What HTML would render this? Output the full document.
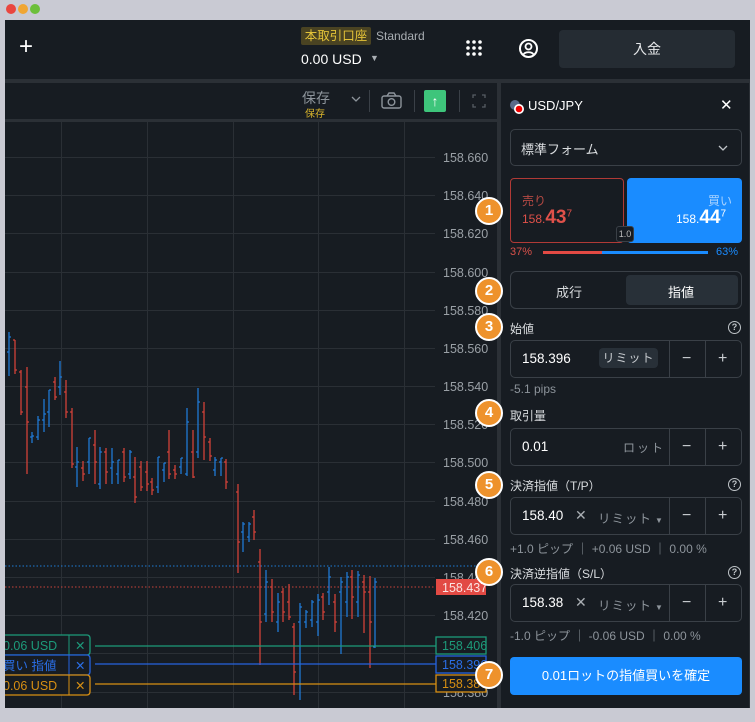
<!DOCTYPE html>
<html><head><meta charset="utf-8"><style>
*{margin:0;padding:0;box-sizing:border-box}
body{width:755px;height:722px;background:#c9cad3;position:relative;overflow:hidden;font-family:"Liberation Sans","Noto Sans CJK JP",sans-serif;color:#e6e8ea}
.a{position:absolute}
.dk{background:#171c22}
.t{position:absolute;white-space:nowrap}
.box{position:absolute;border:1px solid #3a4047;border-radius:5px}
.badge{position:absolute;width:28px;height:28px;border-radius:50%;background:#ee922c;border:2.5px solid #fff;color:#fff;font-weight:bold;font-size:15px;text-align:center;line-height:23px}
.lbl{font-size:12px;color:#d8dbde}
.sub{font-size:12px;color:#8d949b}
.q{position:absolute;width:13px;height:13px;border:1.5px solid #bfc4c8;border-radius:50%;font-size:9px;font-weight:bold;text-align:center;line-height:10px;color:#bfc4c8}
.div{position:absolute;top:0;bottom:0;width:1px;background:#3a4047}
.pm{position:absolute;font-size:16px;color:#c8ccd0;top:0;line-height:36px}
</style></head><body>
<div class="a" style="left:6px;top:4px;width:10px;height:10px;border-radius:50%;background:#e9463f"></div>
<div class="a" style="left:18px;top:4px;width:10px;height:10px;border-radius:50%;background:#f0a633"></div>
<div class="a" style="left:30px;top:4px;width:10px;height:10px;border-radius:50%;background:#6cbf3a"></div>
<div class="a" style="left:5px;top:20px;width:745px;height:688px;background:#2b3036"></div>
<div class="a dk" style="left:5px;top:20px;width:745px;height:59px"></div>
<div class="a dk" style="left:5px;top:83px;width:492px;height:36px"></div>
<div class="a dk" style="left:5px;top:122px;width:492px;height:586px"></div>
<div class="a dk" style="left:501px;top:83px;width:248px;height:625px"></div>
<div class="t" style="left:19px;top:33px;font-size:24px;color:#fff;font-weight:300">+</div>
<div class="t" style="left:301px;top:27px;width:70px;height:18px;background:#4a4322;border-radius:2px;color:#e3c238;font-size:12.5px;line-height:18px;text-align:center">本取引口座</div>
<div class="t" style="left:376px;top:29px;font-size:12px;color:#a9aeb3">Standard</div>
<div class="t" style="left:301px;top:51px;font-size:14px;color:#fff">0.00 USD</div>
<div class="t" style="left:370px;top:53px;font-size:9px;color:#a9aeb3">▼</div>
<svg class="a" style="left:466px;top:40px" width="18" height="18"><g fill="#fff"><circle cx="2" cy="2" r="1.8"/><circle cx="8" cy="2" r="1.8"/><circle cx="14" cy="2" r="1.8"/><circle cx="2" cy="8" r="1.8"/><circle cx="8" cy="8" r="1.8"/><circle cx="14" cy="8" r="1.8"/><circle cx="2" cy="14" r="1.8"/><circle cx="8" cy="14" r="1.8"/><circle cx="14" cy="14" r="1.8"/></g></svg>
<svg class="a" style="left:518px;top:38px" width="21" height="21"><circle cx="10.5" cy="10.5" r="8.5" fill="none" stroke="#fff" stroke-width="2"/><circle cx="10.5" cy="8.5" r="3" fill="none" stroke="#fff" stroke-width="1.8"/><path d="M5.5 16.5c1.5-3 8.5-3 10 0" fill="none" stroke="#fff" stroke-width="1.8"/></svg>
<div class="a" style="left:559px;top:30px;width:176px;height:38px;background:#252c33;border-radius:4px;font-size:14px;text-align:center;line-height:38px;color:#e6e8ea">入金</div>
<div class="t" style="left:302px;top:88px;font-size:14px;color:#8d949b">保存</div>
<div class="t" style="left:305px;top:105px;font-size:10px;color:#d9b52c">保存</div>
<svg class="a" style="left:351px;top:96px" width="10" height="7"><path d="M1 1l4 4 4-4" fill="none" stroke="#8d949b" stroke-width="1.3"/></svg>
<div class="a" style="left:369px;top:90px;width:1px;height:22px;background:#3a4047"></div>
<svg class="a" style="left:381px;top:92px" width="21" height="17"><rect x="1" y="4" width="19" height="12" rx="2" fill="none" stroke="#8d949b" stroke-width="1.4"/><path d="M6 4l2-3h5l2 3" fill="none" stroke="#8d949b" stroke-width="1.4"/><circle cx="10.5" cy="10" r="3.3" fill="none" stroke="#8d949b" stroke-width="1.4"/></svg>
<div class="a" style="left:414px;top:90px;width:1px;height:22px;background:#3a4047"></div>
<div class="a" style="left:424px;top:90px;width:22px;height:22px;background:#3ec57b;border-radius:2px;color:#fff;font-size:14px;text-align:center;line-height:22px">↑</div>
<div class="a" style="left:459px;top:90px;width:1px;height:22px;background:#3a4047"></div>
<svg class="a" style="left:472px;top:94px" width="14" height="14"><path d="M1 4V1h3M10 1h3v3M13 10v3h-3M4 13H1v-3" fill="none" stroke="#565d64" stroke-width="1.3"/></svg>
<svg class="a" style="left:5px;top:122px" width="492" height="586">
<g stroke="#2a2f35" stroke-width="1">
<path d="M56.5 0V586M142.5 0V586M228.5 0V586M313.5 0V586M399.5 0V586"/>
<path d="M0 35.5H430M0 73.5H430M0 111.5H430M0 150.5H430M0 188.5H430M0 226.5H430M0 264.5H430M0 302.5H430M0 340.5H430M0 379.5H430M0 417.5H430M0 455.5H430M0 493.5H430M0 531.5H430M0 570.5H430"/>
</g>
<g font-size="12.5" fill="#9aa0a6" font-family="Liberation Sans,sans-serif">
<text x="438" y="40">158.660</text><text x="438" y="78">158.640</text><text x="438" y="116">158.620</text><text x="438" y="155">158.600</text><text x="438" y="193">158.580</text><text x="438" y="231">158.560</text><text x="438" y="269">158.540</text><text x="438" y="307">158.520</text><text x="438" y="345">158.500</text><text x="438" y="384">158.480</text><text x="438" y="422">158.460</text><text x="438" y="460">158.440</text><text x="438" y="498">158.420</text><text x="438" y="575">158.380</text>
</g>
<path d="M0 444H487" stroke="#1e7bd6" stroke-dasharray="1.5 2" stroke-width="1"/>
<path d="M0 465H430" stroke="#c9423b" stroke-dasharray="1.5 2" stroke-width="1"/>
<g fill="none" stroke="#d14139" stroke-width="1.3">
<path d="M10 218V252M8 218h2M10 248h2M16 248V293M14 250h2M16 290h2M22 245V352M20 265h2M22 300h2M50 255V278M48 260h2M50 275h2M61 258V296M59 270h2M61 290h2M67 286V346M65 290h2M67 342h2M78 339V359M76 346h2M78 352h2M90 308V362M88 323h2M90 340h2M101 326V362M99 330h2M101 350h2M119 326V360M117 330h2M119 355h2M130 335V381M128 355h2M130 375h2M136 339V369M134 345h2M136 365h2M142 339V369M140 350h2M142 362h2M147 356V373M145 360h2M147 368h2M164 308V357M162 330h2M164 352h2M170 343V357M168 348h2M170 352h2M188 308V356M186 330h2M188 355h2M199 280V338M197 290h2M199 315h2M205 316V339M203 320h2M205 334h2M221 337V367M219 340h2M221 360h2M233 362V451M231 370h2M233 420h2M249 388V418M247 395h2M249 410h2M255 427V543M253 440h2M255 500h2M267 457V500M265 465h2M267 490h2M278 466V500M276 470h2M278 490h2M284 462V498M282 480h2M284 495h2M289 501V573M287 505h2M289 550h2M318 471V498M316 475h2M318 490h2M330 472V510M328 480h2M330 500h2M347 448V497M345 455h2M347 475h2M359 453V511M357 460h2M359 470h2M365 454V546M363 470h2M365 500h2"/>
</g>
<g fill="none" stroke="#2079d4" stroke-width="1.3">
<path d="M4 210V254M2 230h2M4 215h2M27 310V321M25 315h2M27 314h2M33 294V318M31 315h2M33 298h2M39 277V310M37 298h2M39 292h2M44 268V305M42 290h2M44 268h2M55 239V273M53 265h2M55 255h2M72 325V365M70 345h2M72 340h2M84 316V352M82 340h2M84 316h2M95 325V367M93 362h2M95 330h2M107 326V362M105 346h2M107 340h2M113 338V362M111 352h2M113 338h2M125 328V357M123 352h2M125 330h2M153 335V371M151 365h2M153 335h2M159 341V360M157 348h2M159 341h2M176 336V352M174 345h2M176 336h2M182 286V354M180 352h2M182 300h2M193 266V336M191 330h2M193 280h2M210 335V354M208 348h2M210 338h2M216 336V354M214 340h2M216 336h2M238 400V430M236 410h2M238 402h2M244 400V420M242 415h2M244 402h2M261 448V500M259 492h2M261 460h2M273 471V510M271 500h2M273 480h2M295 481V578M293 500h2M295 485h2M301 488V506M299 500h2M301 490h2M307 478V505M305 498h2M307 480h2M313 472V514M311 500h2M313 478h2M324 445V483M322 470h2M324 455h2M336 455V532M334 470h2M336 460h2M342 450V495M340 480h2M342 455h2M353 449V495M351 480h2M353 453h2M370 456V526M368 525h2M370 460h2"/>
</g>
<path d="M90 524H432" stroke="#1d9a7a" stroke-width="1.3"/>
<path d="M90 542H432" stroke="#2563e0" stroke-width="1.3"/>
<path d="M90 562H432" stroke="#d78f13" stroke-width="1.3"/>
<rect x="-5" y="513" width="90" height="20" rx="3" fill="#171c22" stroke="#1d9a7a" stroke-width="1.3"/>
<path d="M64 513V533" stroke="#1d9a7a"/>
<rect x="-5" y="533" width="90" height="20" rx="3" fill="#171c22" stroke="#2563e0" stroke-width="1.3"/>
<path d="M64 533V553" stroke="#2563e0"/>
<rect x="-5" y="553" width="90" height="20" rx="3" fill="#171c22" stroke="#d78f13" stroke-width="1.3"/>
<path d="M64 553V573" stroke="#d78f13"/>
<g font-size="12.5" font-family="Liberation Sans,Noto Sans CJK JP,sans-serif">
<text x="-2" y="528" fill="#1d9a7a">0.06 USD</text><text x="70" y="528" fill="#1d9a7a">✕</text>
<text x="-2" y="548" fill="#2a6ee6">買い 指値</text><text x="70" y="548" fill="#2a6ee6">✕</text>
<text x="-2" y="568" fill="#d78f13">0.06 USD</text><text x="70" y="568" fill="#d78f13">✕</text>
</g>
<rect x="431" y="457" width="50" height="16" fill="#e24a44"/>
<text x="437" y="470" font-size="12.5" fill="#fbe3e2" font-family="Liberation Sans,sans-serif">158.437</text>
<rect x="431" y="515" width="50" height="17" fill="#171c22" stroke="#1d9a7a" stroke-width="1.3"/>
<text x="437" y="528" font-size="12.5" fill="#1d9a7a" font-family="Liberation Sans,sans-serif">158.406</text>
<rect x="431" y="534" width="50" height="17" fill="#171c22" stroke="#2563e0" stroke-width="1.3"/>
<text x="437" y="547" font-size="12.5" fill="#2a6ee6" font-family="Liberation Sans,sans-serif">158.396</text>
<rect x="431" y="553" width="50" height="17" fill="#171c22" stroke="#d78f13" stroke-width="1.3"/>
<text x="437" y="566" font-size="12.5" fill="#d78f13" font-family="Liberation Sans,sans-serif">158.386</text>
</svg>
<svg class="a" style="left:509px;top:99px" width="16" height="16"><circle cx="6" cy="6" r="5" fill="#5a6a8a"/><circle cx="10" cy="10" r="5" fill="#fff"/><circle cx="10" cy="10" r="3.3" fill="#e00"/></svg>
<div class="t" style="left:528px;top:98px;font-size:13px;color:#fff">USD/JPY</div>
<div class="t" style="left:720px;top:96px;font-size:15px;color:#fff">✕</div>
<div class="box" style="left:510px;top:129px;width:232px;height:37px"></div>
<div class="t" style="left:521px;top:139px;font-size:13px;color:#d8dbde">標準フォーム</div>
<svg class="a" style="left:718px;top:145px" width="10" height="7"><path d="M1 1l4 4 4-4" fill="none" stroke="#bfc4c8" stroke-width="1.3"/></svg>
<div class="a" style="left:510px;top:178px;width:114px;height:65px;border:1.3px solid #b03a36;border-radius:4px"></div>
<div class="t" style="left:522px;top:192px;font-size:12px;color:#b64a44">売り</div>
<div class="t" style="left:522px;top:207px;color:#e0514a"><span style="font-size:12px">158.</span><span style="font-size:19px;font-weight:bold">43</span><sup style="font-size:10px">7</sup></div>
<div class="a" style="left:627px;top:178px;width:115px;height:65px;background:#1a8cff;border-radius:4px"></div>
<div class="t" style="left:708px;top:192px;font-size:12px;color:#a8d2ff">買い</div>
<div class="t" style="left:676px;top:207px;color:#fff"><span style="font-size:12px">158.</span><span style="font-size:19px;font-weight:bold">44</span><sup style="font-size:10px">7</sup></div>
<div class="a" style="left:616px;top:226px;width:18px;height:16px;background:#171c22;border:1px solid #3a4047;border-radius:3px;font-size:9px;text-align:center;line-height:14px;color:#bbb">1.0</div>
<div class="t" style="left:510px;top:246px;font-size:11px;color:#d9514a">37%</div>
<div class="a" style="left:543px;top:251px;width:59px;height:3px;background:#e24a44"></div>
<div class="a" style="left:602px;top:251px;width:106px;height:3px;background:#1a8cff"></div>
<div class="t" style="left:716px;top:246px;font-size:11px;color:#1a8cff">63%</div>
<div class="box" style="left:510px;top:271px;width:232px;height:38px;border-radius:6px"></div>
<div class="a" style="left:626px;top:275px;width:112px;height:30px;background:#283038;border-radius:4px"></div>
<div class="t" style="left:556px;top:282px;font-size:13px;color:#d8dbde">成行</div>
<div class="t" style="left:668px;top:282px;font-size:13px;color:#fff">指値</div>
<div class="t lbl" style="left:510px;top:320px">始値</div>
<div class="q" style="left:728px;top:321px">?</div>
<div class="box" style="left:510px;top:340px;width:232px;height:38px"><div class="div" style="left:158px"></div><div class="div" style="left:194px"></div><span class="pm" style="left:171px">−</span><span class="pm" style="left:207px">+</span></div>
<div class="t" style="left:522px;top:351px;font-size:13.5px;color:#fff">158.396</div>
<div class="a" style="left:599px;top:348px;width:59px;height:20px;background:#283038;border-radius:4px;font-size:12px;text-align:center;line-height:20px;color:#c8ccd0;letter-spacing:1px">リミット</div>
<div class="t sub" style="left:510px;top:382px">-5.1 pips</div>
<div class="t lbl" style="left:510px;top:407px">取引量</div>
<div class="box" style="left:510px;top:428px;width:232px;height:38px"><div class="div" style="left:158px"></div><div class="div" style="left:194px"></div><span class="pm" style="left:171px">−</span><span class="pm" style="left:207px">+</span></div>
<div class="t" style="left:522px;top:439px;font-size:13.5px;color:#fff">0.01</div>
<div class="t" style="left:623px;top:439px;font-size:12px;color:#8d949b;letter-spacing:2px">ロット</div>
<div class="t lbl" style="left:510px;top:477px">決済指値（T/P）</div>
<div class="q" style="left:728px;top:478px">?</div>
<div class="box" style="left:510px;top:497px;width:232px;height:38px"><div class="div" style="left:158px"></div><div class="div" style="left:194px"></div><span class="pm" style="left:171px">−</span><span class="pm" style="left:207px">+</span></div>
<div class="t" style="left:522px;top:508px;font-size:13.5px;color:#fff">158.40</div>
<div class="t" style="left:575px;top:507px;font-size:14px;color:#a9aeb3">✕</div>
<div class="t" style="left:598px;top:508px;font-size:12.5px;color:#8d949b;letter-spacing:1px">リミット<span style="font-size:8px;margin-left:3px">▼</span></div>
<div class="t sub" style="left:510px;top:540px">+1.0 ピップ ｜ +0.06 USD ｜ 0.00 %</div>
<div class="t lbl" style="left:510px;top:565px">決済逆指値（S/L）</div>
<div class="q" style="left:728px;top:566px">?</div>
<div class="box" style="left:510px;top:584px;width:232px;height:38px"><div class="div" style="left:158px"></div><div class="div" style="left:194px"></div><span class="pm" style="left:171px">−</span><span class="pm" style="left:207px">+</span></div>
<div class="t" style="left:522px;top:595px;font-size:13.5px;color:#fff">158.38</div>
<div class="t" style="left:575px;top:594px;font-size:14px;color:#a9aeb3">✕</div>
<div class="t" style="left:598px;top:595px;font-size:12.5px;color:#8d949b;letter-spacing:1px">リミット<span style="font-size:8px;margin-left:3px">▼</span></div>
<div class="t sub" style="left:510px;top:627px">-1.0 ピップ ｜ -0.06 USD ｜ 0.00 %</div>
<div class="a" style="left:510px;top:657px;width:232px;height:38px;background:#1a8cff;border-radius:4px;font-size:13px;color:#fff;text-align:center;line-height:38px">0.01ロットの指値買いを確定</div>
<div class="badge" style="left:475px;top:197px">1</div>
<div class="badge" style="left:475px;top:277px">2</div>
<div class="badge" style="left:475px;top:313px">3</div>
<div class="badge" style="left:475px;top:399px">4</div>
<div class="badge" style="left:475px;top:471px">5</div>
<div class="badge" style="left:475px;top:558px">6</div>
<div class="badge" style="left:475px;top:661px">7</div>
</body></html>
